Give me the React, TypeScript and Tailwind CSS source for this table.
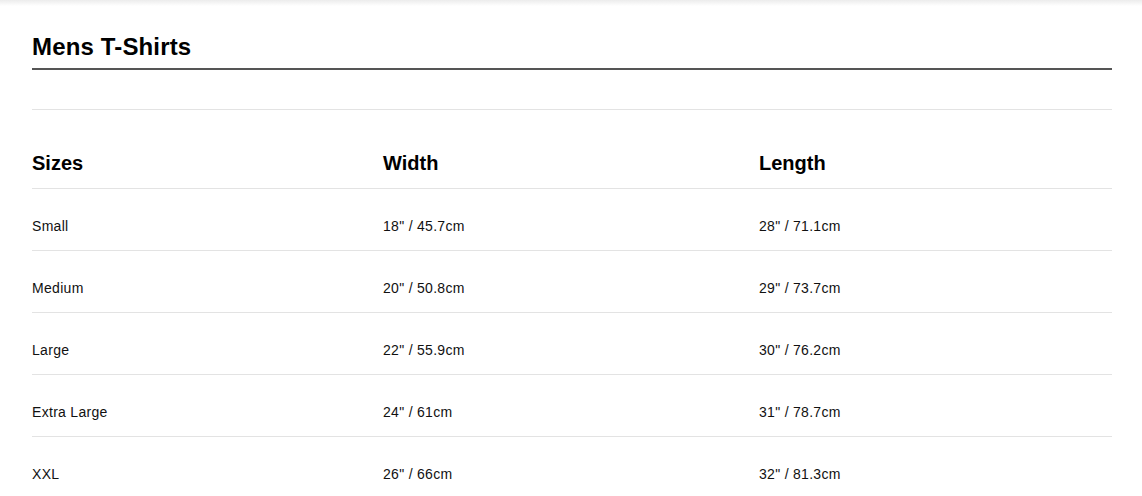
const rows = [
  { size: "Small", width: '18" / 45.7cm', length: '28" / 71.1cm' },
  { size: "Medium", width: '20" / 50.8cm', length: '29" / 73.7cm' },
  { size: "Large", width: '22" / 55.9cm', length: '30" / 76.2cm' },
  { size: "Extra Large", width: '24" / 61cm', length: '31" / 78.7cm' },
  { size: "XXL", width: '26" / 66cm', length: '32" / 81.3cm' },
];

export default function App() {
  return (
    <div className="min-h-[496px] bg-white font-['Liberation_Sans',Arial,sans-serif] text-[#111]">
      <div className="h-[6px] bg-gradient-to-b from-[#ececec] to-white" />
      <div className="ml-8 w-[1080px]">
        <h1 className="mt-[25px] border-b-2 border-[#555] pb-[5px] text-[24px] leading-8 font-bold tracking-[0.15px] text-black">
          Mens T-Shirts
        </h1>
        <div className="mt-[39px] h-px bg-[#e3e3e3]" />
        <div className="grid grid-cols-[351px_376px_1fr] border-b border-[#e3e3e3] pt-[39px] pb-[11px] text-[20px] leading-7 font-bold text-black">
          <div>Sizes</div>
          <div>Width</div>
          <div>Length</div>
        </div>
        {rows.map((row) => (
          <div
            key={row.size}
            className="grid grid-cols-[351px_376px_1fr] border-b border-[#e3e3e3] pt-[27px] pb-[14px] text-[14px] leading-5 tracking-[0.3px]"
          >
            <div>{row.size}</div>
            <div>{row.width}</div>
            <div>{row.length}</div>
          </div>
        ))}
      </div>
    </div>
  );
}
